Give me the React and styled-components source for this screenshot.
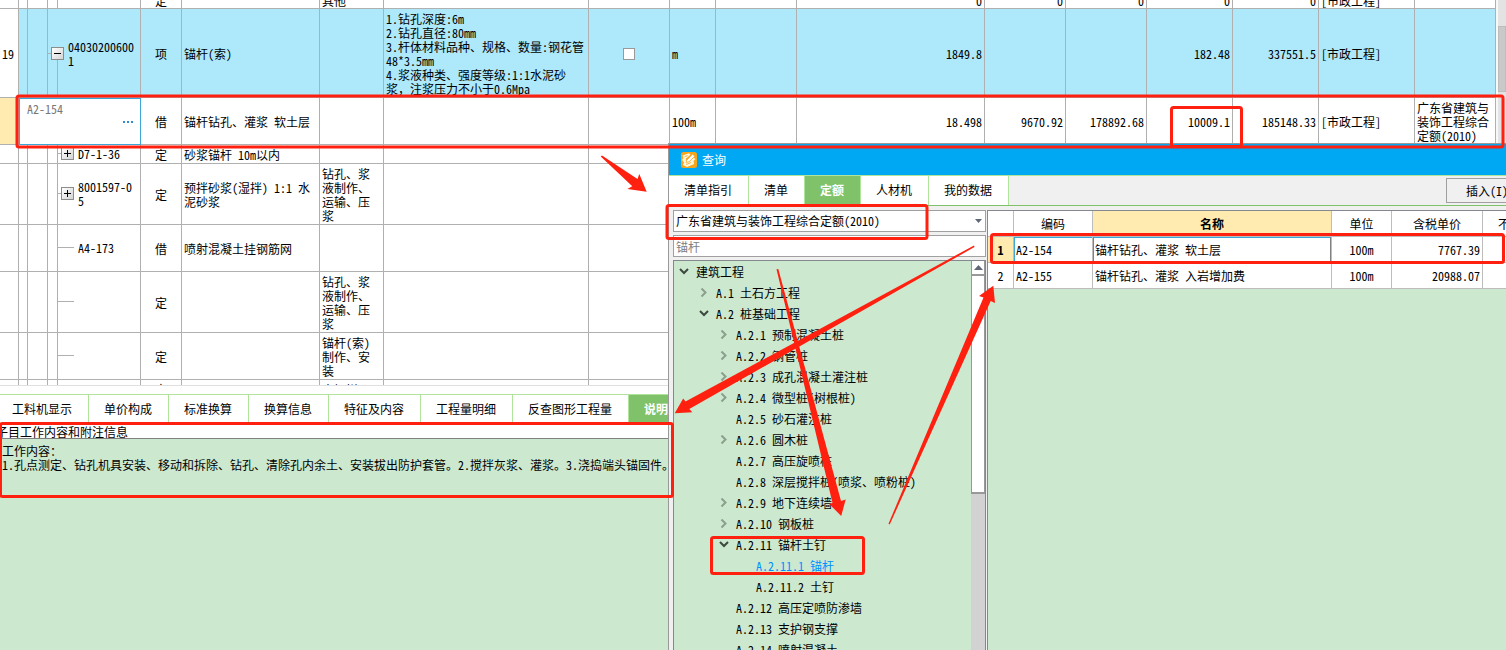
import React from "react";
import styled, { createGlobalStyle, css } from "styled-components";

const c = {
  grid: "#b0b0b0",
  rowBlue: "#ade8fb",
  yellow: "#ffebb0",
  paleGreen: "#cce8cf",
  tabGreen: "#80c269",
  tabLine: "#b0e39b",
  title: "#00a8f3",
  focus: "#3ba7d8",
  chrome: "#f0f0f0",
  red: "#ff2010",
};

const Global = createGlobalStyle`
  * { box-sizing: border-box; }
  body { margin: 0; }
  body, button, input, select, table {
    font-family: "Noto Sans Mono CJK SC", "Noto Sans CJK SC", monospace;
    font-size: 12px;
    line-height: 14px;
    color: #000;
  }
`;

const Window = styled.div`
  position: relative;
  display: flex;
  flex-direction: column;
  height: 100vh;
  overflow: hidden;
  background: #fff;
`;

const GridPane = styled.div`
  display: flex;
  flex: 0 0 386px;
  overflow: hidden;
  border-bottom: 1px solid #e0e0e0;
`;

const Sheet = styled.table`
  flex: 1;
  width: 100%;
  min-width: 0;
  height: max-content;
  table-layout: fixed;
  border-collapse: separate;
  border-spacing: 0;
`;

const Row = styled.tr`
  background: ${(p) => (p.$active ? c.rowBlue : "#fff")};
`;

const Cell = styled.td`
  padding: 0;
  border-right: 1px solid ${c.grid};
  border-bottom: 1px solid ${c.grid};
  overflow: hidden;
  ${(p) => p.$marked && css`background: ${c.yellow};`}
  ${(p) => p.$plain && css`background: #fff;`}
`;

const EditCell = styled(Cell)`
  border-color: ${c.focus};
  box-shadow: inset 1px 1px ${c.focus};
`;

const Fill = styled.div`
  display: flex;
  height: ${(p) => p.$h}px;
  padding: ${(p) => (p.$v ? "0 2px" : "2px 2px 0")};
  overflow: hidden;
  white-space: pre;
  align-items: ${(p) => p.$v || "center"};
  justify-content: ${(p) => p.$align || "flex-start"};
`;

const CodeFill = styled.div`
  display: flex;
  align-items: center;
  height: ${(p) => p.$h}px;
  padding-bottom: ${(p) => (p.$stem ? 0 : 2)}px;
  white-space: pre;
`;

const Branch = styled.span`
  width: ${(p) => p.$w}px;
  height: 1px;
  background: ${c.grid};
`;

const Gutter = styled.span`
  display: flex;
  flex-direction: column;
  align-items: center;
  align-self: stretch;
`;

const Stem = styled.span`
  flex: 1;
  width: 1px;
  background: ${(p) => (p.$hidden ? "transparent" : c.grid)};
`;

const Toggle = styled.button`
  display: block;
  width: 13px;
  height: 13px;
  padding: 0;
  border: 1px solid #8c8c8c;
  background: linear-gradient(135deg, #fff, #d4d4d4);
  svg { display: block; }
`;

const CodeText = styled.span`
  padding: 2px 0 0 4px;
`;

const EditBox = styled.div`
  display: flex;
  flex-direction: column;
  gap: 2px;
  height: 46px;
  padding: 4px 6px 0 8px;
`;

const CodeInput = styled.input`
  width: 80px;
  height: 14px;
  padding: 0;
  border: 0;
  outline: 0;
  background: none;
  color: #777;
`;

const MoreButton = styled.button`
  align-self: flex-end;
  width: 12px;
  height: 8px;
  padding: 0;
  border: 0;
  background: none;
  svg { display: block; }
`;

const Check = styled.input`
  appearance: none;
  width: 12px;
  height: 12px;
  margin: 0;
  border: 1px solid #999;
  background: #fff;
`;

const ScrollTrack = styled.div`
  flex: 0 0 10px;
  padding-top: 26px;
  border-left: 2px solid #f8f8f8;
  background: #e3e3e3;
`;

const ScrollThumb = styled.div`
  height: 66px;
  border: 1px solid #bdbdbd;
  background: #c9c9c9;
`;

const Tabs = styled.div`
  display: flex;
  flex: none;
  border-top: 1px solid ${c.tabLine};
`;

const BottomTabs = styled(Tabs)`
  height: 30px;
  margin: 8px 0 0 -3px;
`;

const Tab = styled.button`
  flex: none;
  padding: 0 16px 1px 15px;
  border: 0;
  border-right: 1px solid ${c.tabLine};
  background: ${(p) => (p.$on ? c.tabGreen : "#fff")};
  color: ${(p) => (p.$on ? "#fff" : "#000")};
  font-weight: ${(p) => (p.$on ? 700 : 400)};
  white-space: nowrap;
`;

const DetailTitle = styled.div`
  flex: none;
  height: 15px;
  margin-left: -4px;
  border-bottom: 1px solid #808080;
  line-height: 16px;
`;

const Detail = styled.div`
  flex: 1;
  padding: 5px 2px;
  background: ${c.paleGreen};
  white-space: pre;
`;

const Dialog = styled.section`
  position: absolute;
  top: 143px;
  right: 0;
  bottom: 0;
  left: 668px;
  display: flex;
  flex-direction: column;
  overflow: hidden;
  border-top: 1px solid #999;
  border-left: 1px solid #999;
  background: ${c.chrome};
`;

const TitleBar = styled.header`
  display: flex;
  flex: none;
  align-items: center;
  gap: 5px;
  height: 31px;
  padding-left: 12px;
  background: ${c.title};
  color: #fff;
`;

const DialogTabs = styled(Tabs)`
  height: 31px;
  border-bottom: 1px solid ${c.tabGreen};
`;

const InsertButton = styled.button`
  align-self: center;
  flex: none;
  width: 90px;
  height: 25px;
  margin: 0 -30px 0 auto;
  padding: 0 0 0 19px;
  border: 1px solid #a0a0a0;
  background: ${c.chrome};
  text-align: left;
`;

const Body = styled.div`
  display: flex;
  flex: 1;
  gap: 1px;
  min-height: 0;
  padding: 4px 0 0 4px;
`;

const Side = styled.div`
  display: flex;
  flex: 0 0 313px;
  flex-direction: column;
  gap: 3px;
`;

const Combo = styled.div`
  display: grid;
  flex: none;
  align-items: center;
  > * { grid-area: 1 / 1; }
  > svg { justify-self: end; margin-right: 4px; pointer-events: none; }
`;

const field = css`
  width: 100%;
  height: 22px;
  padding: 0 2px;
  border: 1px solid #a0a0a0;
  border-radius: 0;
  background: #fff;
`;

const Select = styled.select`
  ${field}
  appearance: none;
`;

const Search = styled.input`
  ${field}
  flex: none;
  color: #808080;
`;

const TreeBox = styled.div`
  display: flex;
  flex: 1;
  min-height: 0;
  overflow: hidden;
  border: 1px solid #85888f;
  border-bottom: 0;
  background: ${c.paleGreen};
`;

const Tree = styled.ul`
  flex: 1;
  margin: 0;
  padding: 0;
  list-style: none;
`;

const Node = styled.li`
  display: flex;
  align-items: center;
  gap: 7px;
  height: 21px;
  padding-left: ${(p) => 5 + p.$level * 20}px;
  white-space: pre;
  color: ${(p) => (p.$on ? "#0090ff" : "#000")};
  svg { flex: none; }
`;

const TreeScroll = styled.div`
  display: flex;
  flex-direction: column;
  flex: 0 0 14px;
  background: #d2d2d2;
`;

const ScrollUp = styled.button`
  display: grid;
  place-items: center;
  height: 14px;
  padding: 0;
  border: 1px solid #999;
  border-top: 0;
  background: #fff;
`;

const TreeThumb = styled.div`
  height: 219px;
  border: 1px solid #999;
  border-width: 1px 1px 2px;
  background: #fff;
`;

const ResultPane = styled.div`
  flex: 1;
  min-width: 0;
  overflow: hidden;
  border-top: 1px solid #85888f;
  border-left: 1px solid #85888f;
  background: ${c.paleGreen};
`;

const Results = styled.table`
  width: calc(100% + 68px);
  table-layout: fixed;
  border-collapse: separate;
  border-spacing: 0;
  background: #fff;
  th, td {
    height: 26px;
    padding: 1px 2px 0;
    border-right: 1px solid #bdbdbd;
    border-bottom: 1px solid #bdbdbd;
    white-space: nowrap;
  }
`;

const Head = styled.th`
  font-weight: ${(p) => (p.$on ? 700 : 400)};
  ${(p) => p.$on && css`background: ${c.yellow};`}
`;

const ResultCell = styled.td`
  text-align: ${(p) => p.$align || "left"};
  ${(p) => p.$marked && css`background: ${c.yellow}; font-weight: 700;`}
  ${(p) => p.$focus && css`box-shadow: inset 1px 1px ${c.focus};`}
  ${(p) => p.$current && css`box-shadow: inset 1px 0 #808080, inset -1px 0 #808080, inset 0 1px ${c.focus};`}
`;

const Marks = styled.svg`
  position: absolute;
  top: 0;
  left: 0;
  pointer-events: none;
`;

const widths = [19, 9, 20, 10, 83, 41, 138, 64, 205, 81, 46, 81, null, 81, 81, 86, 86, 96, 81];

const rows = [
  { h: 8, v: "flex-end", kind: "定", work: "其他", nums: ["0", "0", "0", "0", "0"], major: "[市政工程]" },
  {
    h: 88, no: "19", active: true, box: "minus", root: true, code: "04030200600\n1", kind: "项", name: "锚杆(索)",
    feature: "1.钻孔深度:6m\n2.钻孔直径:80mm\n3.杆体材料品种、规格、数量:钢花管\n48*3.5mm\n4.浆液种类、强度等级:1:1水泥砂\n浆，注浆压力不小于0.6Mpa",
    check: true, unit: "m", nums: ["1849.8", "", "", "182.48", "337551.5"], major: "[市政工程]",
  },
  {
    h: 46, edit: true, code: "A2-154", kind: "借", name: "锚杆钻孔、灌浆 软土层", unit: "100m",
    nums: ["18.498", "9670.92", "178892.68", "10009.1", "185148.33"], major: "[市政工程]",
    source: "广东省建筑与\n装饰工程综合\n定额(2010)",
  },
  { h: 18, box: "plus", code: "D7-1-36", kind: "定", name: "砂浆锚杆 10m以内" },
  { h: 60, box: "plus", code: "8001597-0\n5", kind: "定", name: "预拌砂浆(湿拌) 1:1 水\n泥砂浆", work: "钻孔、浆\n液制作、\n运输、压\n浆" },
  { h: 46, leaf: true, code: "A4-173", kind: "借", name: "喷射混凝土挂钢筋网" },
  { h: 60, leaf: true, kind: "定", work: "钻孔、浆\n液制作、\n运输、压\n浆" },
  { h: 46, leaf: true, kind: "定", work: "锚杆(索)\n制作、安\n装" },
  { h: 18, kind: "定", work: "土钉拼压" },
];

const tree = [
  [0, "open", "建筑工程"],
  [1, "shut", "A.1 土石方工程"],
  [1, "open", "A.2 桩基础工程"],
  [2, "shut", "A.2.1 预制混凝土桩"],
  [2, "shut", "A.2.2 钢管桩"],
  [2, "shut", "A.2.3 成孔混凝土灌注桩"],
  [2, "shut", "A.2.4 微型桩(树根桩)"],
  [2, "", "A.2.5 砂石灌注桩"],
  [2, "shut", "A.2.6 圆木桩"],
  [2, "", "A.2.7 高压旋喷桩"],
  [2, "", "A.2.8 深层搅拌桩(喷浆、喷粉桩)"],
  [2, "shut", "A.2.9 地下连续墙"],
  [2, "shut", "A.2.10 钢板桩"],
  [2, "open", "A.2.11 锚杆土钉"],
  [3, "", "A.2.11.1 锚杆", true],
  [3, "", "A.2.11.2 土钉"],
  [2, "", "A.2.12 高压定喷防渗墙"],
  [2, "", "A.2.13 支护钢支撑"],
  [2, "", "A.2.14 喷射混凝土"],
];

function ToggleBox({ kind }) {
  return (
    <Toggle aria-label={kind === "plus" ? "展开" : "收起"}>
      <svg width="11" height="11" viewBox="0 0 11 11" stroke="#000">
        <path d={kind === "plus" ? "M2 5.5h7M5.5 2v7" : "M2 5.5h7"} />
      </svg>
    </Toggle>
  );
}

function CodeCells({ row }) {
  if (row.edit) {
    return (
      <EditCell colSpan={4} $plain>
        <EditBox>
          <CodeInput aria-label="编码" defaultValue={row.code} />
          <MoreButton aria-label="更多">
            <svg width="12" height="8" fill="#2f8fd0">
              <path d="M1 3h2v2H1zM5 3h2v2H5zM9 3h2v2H9z" />
            </svg>
          </MoreButton>
        </EditBox>
      </EditCell>
    );
  }
  if (row.root) {
    return (
      <>
        <Cell />
        <Cell />
        <Cell colSpan={2}>
          <CodeFill $h={row.h} $stem>
            <Branch $w={3} />
            <Gutter>
              <Stem $hidden />
              <ToggleBox kind={row.box} />
              <Stem />
            </Gutter>
            <CodeText>{row.code}</CodeText>
          </CodeFill>
        </Cell>
      </>
    );
  }
  return (
    <>
      <Cell />
      <Cell />
      <Cell />
      <Cell>
        <CodeFill $h={row.h}>
          {row.box && <Branch $w={3} />}
          {row.box && <ToggleBox kind={row.box} />}
          {row.leaf && <Branch $w={16} />}
          <CodeText>{row.code}</CodeText>
        </CodeFill>
      </Cell>
    </>
  );
}

function SheetRow({ row }) {
  const nums = row.nums || ["", "", "", "", ""];
  const cell = (key, text, align) => (
    <Cell key={key}>
      <Fill $h={row.h} $v={row.v} $align={align}>{text}</Fill>
    </Cell>
  );
  return (
    <Row $active={row.active}>
      <Cell $plain={!row.edit} $marked={row.edit}>
        <Fill $h={row.h}>{row.no}</Fill>
      </Cell>
      <CodeCells row={row} />
      {cell("kind", row.kind, "center")}
      {cell("name", row.name)}
      {cell("work", row.work)}
      {cell("feature", row.feature)}
      {cell("check", row.check && <Check type="checkbox" aria-label="锁定" />, "center")}
      {cell("unit", row.unit)}
      {cell("expr", "")}
      {nums.map((n, i) => cell(`n${i}`, n, "flex-end"))}
      {cell("major", row.major)}
      {cell("source", row.source)}
    </Row>
  );
}

function Chevron({ state }) {
  return (
    <svg width="10" height="10" viewBox="0 0 10 10" fill="none" strokeWidth="2">
      {state === "open" && <path d="M1 2l4 4 4-4" stroke="#3c4a3e" />}
      {state === "shut" && <path d="M2.500 0.500l4 4-4 4" stroke="#8a9f8c" />}
    </svg>
  );
}

function Logo() {
  return (
    <svg width="16" height="16" viewBox="0 0 16 16">
      <rect width="16" height="16" rx="2.500" fill="#f6a51c" />
      <path d="M1.500 3.500L8 1.200 9.500 2.800 5 6.500 4.800 9 6 10.200 8.500 9.500 12.500 5.500 14.500 7 12.500 9 13.200 12 6 15 2 13 3 10.500 1.200 8 2.500 6Z" fill="#fff6e0" />
      <path d="M5.500 8.500L11.500 2.200 13.800 4.200 8 9.800 5.200 10.500Z" fill="#fff" stroke="#f6a51c" strokeWidth="0.700" />
      <path d="M5 12.500l5-2M3.500 4.800l3-1.300" stroke="#f6a51c" strokeWidth="0.800" fill="none" />
    </svg>
  );
}

function Annotations() {
  return (
    <Marks width="1506" height="650" viewBox="0 0 1506 650" aria-hidden="true">
      <g fill="none" stroke={c.red} strokeWidth="3">
        <rect x="17" y="96" width="1486" height="51" rx="2" />
        <rect x="1171.500" y="107.500" width="70" height="39" rx="2" />
        <rect x="667" y="205.500" width="260" height="33" rx="2" />
        <rect x="991.500" y="234.500" width="512" height="28" rx="2" />
        <rect x="711.500" y="537.500" width="152" height="36" rx="2" />
        <rect x="0.500" y="423.500" width="672" height="73" rx="2" />
      </g>
      <g fill={c.red}>
        <path d="M600.700 156.500L602 155.500 637.500 179 639.300 174 646.700 191.700 627.300 189 632.300 186.300Z" />
        <path d="M974 245.500L974.500 247 689.300 409 692.300 412.300 674.700 413.300 683.200 398.500 685.500 401.500Z" />
        <path d="M776.500 269.300L778.300 269 841 501 845.700 499.500 841.200 516 829 503.700 832.500 503Z" />
        <path d="M888.500 523.800L889.700 524.500 990.700 301 995 303 993.300 285.700 979 296 983.500 297.500Z" />
      </g>
    </Marks>
  );
}

export default function App() {
  return (
    <Window>
      <Global />
      <GridPane>
        <Sheet>
          <colgroup>
            {widths.map((w, i) => <col key={i} width={w || undefined} />)}
          </colgroup>
          <tbody>
            {rows.map((r, i) => <SheetRow key={i} row={r} />)}
          </tbody>
        </Sheet>
        <ScrollTrack><ScrollThumb /></ScrollTrack>
      </GridPane>
      <BottomTabs>
        {["工料机显示", "单价构成", "标准换算", "换算信息", "特征及内容", "工程量明细", "反查图形工程量", "说明信息"].map((t) => (
          <Tab key={t} $on={t === "说明信息"}>{t}</Tab>
        ))}
      </BottomTabs>
      <DetailTitle>子目工作内容和附注信息</DetailTitle>
      <Detail>
        {"工作内容：\n1.孔点测定、钻孔机具安装、移动和拆除、钻孔、清除孔内余土、安装拔出防护套管。2.搅拌灰浆、灌浆。3.浇捣端头锚固件。"}
      </Detail>

      <Dialog>
        <TitleBar><Logo />查询</TitleBar>
        <DialogTabs>
          {["清单指引", "清单", "定额", "人材机", "我的数据"].map((t) => (
            <Tab key={t} $on={t === "定额"}>{t}</Tab>
          ))}
          <InsertButton>插入(I)</InsertButton>
        </DialogTabs>
        <Body>
          <Side>
            <Combo>
              <Select aria-label="定额库">
                <option>广东省建筑与装饰工程综合定额(2010)</option>
              </Select>
              <svg width="7" height="4"><path d="M0 0h7L3.500 4z" fill="#606878" /></svg>
            </Combo>
            <Search aria-label="搜索" defaultValue="锚杆" />
            <TreeBox>
              <Tree role="tree">
                {tree.map(([level, state, text, on]) => (
                  <Node key={text} role="treeitem" $level={level} $on={on}>
                    <Chevron state={state} />
                    {text}
                  </Node>
                ))}
              </Tree>
              <TreeScroll>
                <ScrollUp aria-label="向上滚动">
                  <svg width="9" height="5"><path d="M0 5h9L4.500 0z" fill="#606878" /></svg>
                </ScrollUp>
                <TreeThumb />
              </TreeScroll>
            </TreeBox>
          </Side>
          <ResultPane>
            <Results>
              <colgroup>
                <col width="26" /><col width="79" /><col /><col width="60" /><col width="91" /><col width="91" />
              </colgroup>
              <thead>
                <tr>
                  <Head /><Head>编码</Head><Head $on>名称</Head><Head>单位</Head><Head>含税单价</Head><Head>不含税单价</Head>
                </tr>
              </thead>
              <tbody>
                <tr>
                  <ResultCell $align="center" $marked>1</ResultCell>
                  <ResultCell $focus>A2-154</ResultCell>
                  <ResultCell $current>锚杆钻孔、灌浆 软土层</ResultCell>
                  <ResultCell $align="center">100m</ResultCell>
                  <ResultCell $align="right">7767.39</ResultCell>
                  <ResultCell />
                </tr>
                <tr>
                  <ResultCell $align="center">2</ResultCell>
                  <ResultCell>A2-155</ResultCell>
                  <ResultCell>锚杆钻孔、灌浆 入岩增加费</ResultCell>
                  <ResultCell $align="center">100m</ResultCell>
                  <ResultCell $align="right">20988.07</ResultCell>
                  <ResultCell />
                </tr>
              </tbody>
            </Results>
          </ResultPane>
        </Body>
      </Dialog>
      <Annotations />
    </Window>
  );
}
